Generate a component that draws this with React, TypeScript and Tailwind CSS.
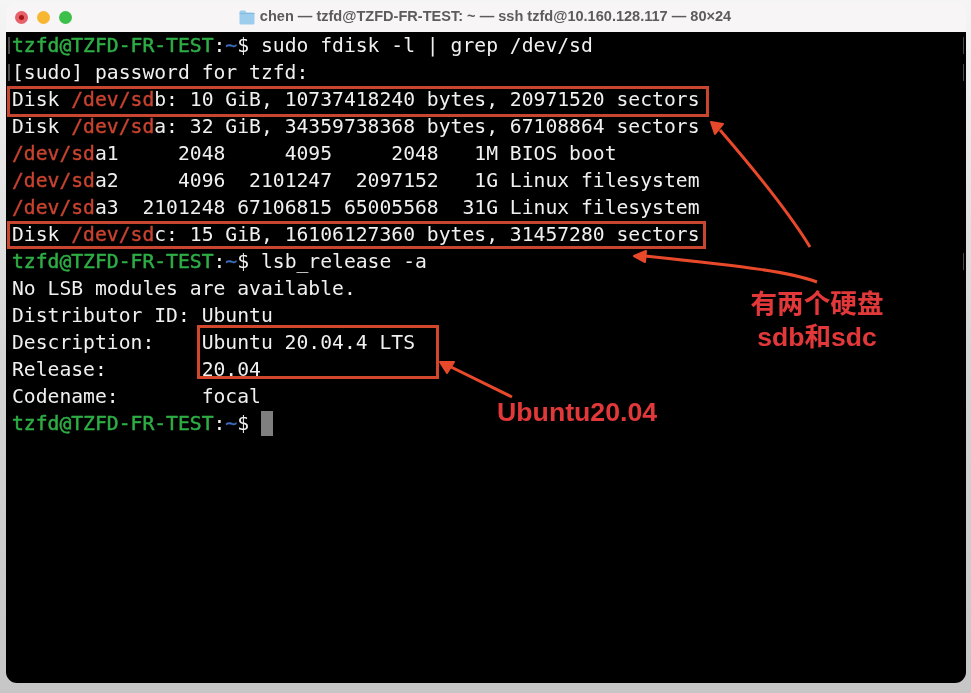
import React from "react";

const G = ({ children }: { children: React.ReactNode }) => <span className="text-[#2eae45] [-webkit-text-stroke:0.5px_#2eae45]">{children}</span>;
const R = ({ children }: { children: React.ReactNode }) => <span className="text-[#c8432f] [-webkit-text-stroke:0.4px_#c8432f]">{children}</span>;
const Prompt = () => (
  <>
    <G>tzfd@TZFD-FR-TEST</G>:<span className="text-[#3d6fc0] [-webkit-text-stroke:0.4px_#3d6fc0]">~</span>$
  </>
);
const Mark = ({ right }: { right?: boolean }) => (
  <span className={right ? "ml-auto mr-[2px] h-[17px] w-[1.5px] shrink-0 bg-[#4a4a4a]" : "ml-[2px] h-[17px] w-[1.5px] shrink-0 bg-[#4a4a4a]"} />
);

const lines: { text: React.ReactNode; left?: boolean; right?: boolean }[] = [
  { text: <><Prompt /> sudo fdisk -l | grep /dev/sd</>, left: true, right: true },
  { text: <>[sudo] password for tzfd:</>, left: true, right: true },
  { text: <>Disk <R>/dev/sd</R>b: 10 GiB, 10737418240 bytes, 20971520 sectors</> },
  { text: <>Disk <R>/dev/sd</R>a: 32 GiB, 34359738368 bytes, 67108864 sectors</> },
  { text: <><R>/dev/sd</R>a1     2048     4095     2048   1M BIOS boot</> },
  { text: <><R>/dev/sd</R>a2     4096  2101247  2097152   1G Linux filesystem</> },
  { text: <><R>/dev/sd</R>a3  2101248 67106815 65005568  31G Linux filesystem</> },
  { text: <>Disk <R>/dev/sd</R>c: 15 GiB, 16106127360 bytes, 31457280 sectors</> },
  { text: <><Prompt /> lsb_release -a</>, right: true },
  { text: <>No LSB modules are available.</> },
  { text: <>Distributor ID: Ubuntu</> },
  { text: <>Description:    Ubuntu 20.04.4 LTS</> },
  { text: <>Release:        20.04</> },
  { text: <>Codename:       focal</> },
  { text: <><Prompt /> <span className="inline-block w-[12px] h-[25px] bg-[#7f7f7f] align-top mt-[1px]" /></> },
];

export default function App() {
  return (
    <div className="relative w-[971px] h-[693px] overflow-hidden bg-gradient-to-b from-[#f5f5f5] via-[#d6d6d6] to-[#c6c6c6] pl-[6px] pr-[5px] pt-[2px] pb-[10px]">
      <div className="flex flex-col h-full rounded-[11px] overflow-hidden blur-[0.4px]">
        <div className="grid h-[30px] shrink-0 grid-cols-[1fr_auto_1fr] items-center bg-[#f8f5f7]">
          <div className="flex gap-[9px] pl-[9px]">
            <span className="flex h-[13px] w-[13px] items-center justify-center rounded-full bg-[#e8606a]"><span className="h-[5px] w-[5px] rounded-full bg-[#a01414]" /></span>
            <span className="h-[13px] w-[13px] rounded-full bg-[#f7b733]" />
            <span className="h-[13px] w-[13px] rounded-full bg-[#3cc04a]" />
          </div>
          <div className="flex items-center gap-[5px] pr-[2px] text-[14.55px] font-bold text-[#5c5c5c] font-['Liberation_Sans',sans-serif]">
            <svg width="16" height="15" viewBox="0 0 16 15" className="shrink-0">
              <path d="M0.5 2 Q0.5 0.5 2 0.5 H6 L7.5 2.5 H14 Q15.5 2.5 15.5 4 V13 Q15.5 14.5 14 14.5 H2 Q0.5 14.5 0.5 13 Z" fill="#9ccdec" />
              <path d="M0.5 3.5 H15.5" stroke="#7fb9de" strokeWidth="1" />
            </svg>
            <span>chen — tzfd@TZFD-FR-TEST: ~ — ssh tzfd@10.160.128.117 — 80×24</span>
          </div>
          <div />
        </div>
        <div className="flex-1 bg-black text-[19.7px] leading-[27px] text-[#f0f0f0] font-['DejaVu_Sans_Mono',monospace] whitespace-pre">
          {lines.map((l, i) => (
            <div key={i} className="flex h-[27px] items-center">
              <div className="flex w-[6px] shrink-0">{l.left && <Mark />}</div>
              <span>{l.text}</span>
              {l.right && <Mark right />}
            </div>
          ))}
        </div>
      </div>

      {/* annotations drawn over the screenshot */}
      <div className="absolute left-[7px] top-[86px] h-[31px] w-[702px] border-[3px] border-[#c8452f]" />
      <div className="absolute left-[7px] top-[221px] h-[28px] w-[699px] border-[3px] border-[#c8452f]" />
      <div className="absolute left-[197px] top-[325px] h-[54px] w-[242px] border-[3px] border-[#d2462c]" />

      <svg className="absolute left-0 top-0" width="971" height="693" viewBox="0 0 971 693" fill="none">
        <path d="M810 247 Q783 203 720 130" stroke="#e8492b" strokeWidth="3" />
        <path d="M711 122 L723 124 L715 134 Z" fill="#e8492b" stroke="#e8492b" strokeWidth="2" strokeLinejoin="round" />
        <path d="M817 282 C790 272 750 267 645 256" stroke="#e8492b" strokeWidth="3" />
        <path d="M634 256 L646 251 L645 262 Z" fill="#e8492b" stroke="#e8492b" strokeWidth="2" strokeLinejoin="round" />
        <path d="M512 397 L449 366" stroke="#e8492b" strokeWidth="3" />
        <path d="M440 362 L454 362 L447 373 Z" fill="#e8492b" stroke="#e8492b" strokeWidth="2" strokeLinejoin="round" />
      </svg>

      <div className="absolute left-[717px] top-[288px] w-[200px] blur-[0.3px] text-center text-[26.6px] leading-[33px] font-bold text-[#e2383a] font-['Liberation_Sans','Noto_Sans_CJK_SC',sans-serif]">
        <div>有两个硬盘</div>
        <div>sdb和sdc</div>
      </div>
      <div className="absolute left-[497px] top-[397px] blur-[0.3px] text-[26.7px] leading-[30px] font-bold text-[#e2383a] font-['Liberation_Sans',sans-serif]">Ubuntu20.04</div>
    </div>
  );
}
